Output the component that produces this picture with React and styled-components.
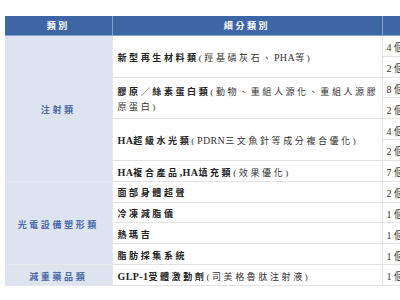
import React, { Fragment } from 'react'
import styled, { createGlobalStyle } from 'styled-components'

const GlobalStyle = createGlobalStyle`
  html, body {
    margin: 0;
    background: #fff;
    overflow: hidden;
  }
  body {
    font-family: "Liberation Serif", "Noto Sans CJK TC", serif;
  }
`

const Page = styled.div`
  padding: 16px 0 0 5px;
  width: 470px;
`

const Table = styled.table`
  border-collapse: collapse;
  table-layout: fixed;
  width: 450px;
  font-size: 9px;
  letter-spacing: 2.6px;
`

const Col = styled.col`
  width: ${p => p.$w}px;
`

const HeadCell = styled.th`
  height: 19px;
  padding: 0;
  background: #3e66a5;
  color: #fff;
  font-weight: bold;
  text-align: center;
  border: 1px solid #86a0cb;
  border-top: none;
  border-left: none;
`

const Row = styled.tr`
  height: 20.8px;
`

const CategoryCell = styled.td`
  background: #dde3ef;
  color: #4a6aa9;
  font-weight: bold;
  text-align: center;
  vertical-align: middle;
  padding: 3px 0 0;
  border: 1px solid #e6e8ee;
  border-left: none;
`

const ItemCell = styled.td`
  color: #222;
  padding: 4px 2px 0 5px;
  line-height: 15px;
  vertical-align: middle;
  border: 1px solid #e4e4e4;
`

const Name = styled.span`
  font-weight: bold;
`

const Note = styled.span`
  font-weight: normal;
  color: #333;
`

const Latin = styled.span`
  letter-spacing: 0.4px;
  font-size: 10px;
`

const Line = styled.span`
  white-space: nowrap;
`

const CountCell = styled.td`
  color: #333;
  padding: 2px 0 0 4px;
  font-size: 10px;
  white-space: nowrap;
  vertical-align: middle;
  border: 1px solid #e4e4e4;
  border-right: none;
`

const groups = [
  {
    category: '注射類',
    items: [
      { name: '新型再生材料類', note: ['(羥基磷灰石、PHA等)'], counts: ['4個', '2個'] },
      { name: '膠原／絲素蛋白類', note: ['(動物、重組人源化、重組人源膠', '原蛋白)'], counts: ['8個', '2個'] },
      { name: 'HA超級水光類', note: ['(PDRN三文魚針等成分複合優化)'], counts: ['4個', '2個'] },
      { name: 'HA複合產品,HA填充類', note: ['(效果優化)'], counts: ['7個'] },
    ],
  },
  {
    category: '光電設備塑形類',
    items: [
      { name: '面部身體超聲', counts: ['2個'] },
      { name: '冷凍減脂儀', counts: ['1個'] },
      { name: '熱瑪吉', counts: ['1個'] },
      { name: '脂肪採集系統', counts: ['1個'] },
    ],
  },
  {
    category: '減重藥品類',
    items: [
      { name: 'GLP-1受體激動劑', note: ['(司美格魯肽注射液)'], counts: ['1個'] },
    ],
  },
]

// latin runs are set tight, the CJK gets the wide tracking
function mixed(str) {
  return str.split(/([A-Za-z0-9\-,]+)/).map((part, i) =>
    /^[A-Za-z0-9\-,]+$/.test(part) ? <Latin key={i}>{part}</Latin> : part
  )
}

function ItemText({ name, note }) {
  if (!note) return <Name>{mixed(name)}</Name>
  return (
    <Fragment>
      <Line>
        <Name>{mixed(name)}</Name>
        <Note>{mixed(note[0])}</Note>
      </Line>
      {note.slice(1).map((l, i) => (
        <Fragment key={i}>
          <br />
          <Note>{mixed(l)}</Note>
        </Fragment>
      ))}
    </Fragment>
  )
}

export default function App() {
  return (
    <Fragment>
      <GlobalStyle />
      <Page>
        <Table>
          <colgroup>
            <Col $w={107} />
            <Col $w={270} />
            <Col $w={73} />
          </colgroup>
          <thead>
            <tr>
              <HeadCell>類別</HeadCell>
              <HeadCell>細分類別</HeadCell>
              <HeadCell>數量</HeadCell>
            </tr>
          </thead>
          <tbody>
            {groups.map(g => {
              const span = g.items.reduce((n, it) => n + it.counts.length, 0)
              return g.items.map((it, i) =>
                it.counts.map((c, j) => (
                  <Row key={g.category + i + '-' + j}>
                    {i === 0 && j === 0 && (
                      <CategoryCell rowSpan={span}>{g.category}</CategoryCell>
                    )}
                    {j === 0 && (
                      <ItemCell rowSpan={it.counts.length}>
                        <ItemText name={it.name} note={it.note} />
                      </ItemCell>
                    )}
                    <CountCell>{c}</CountCell>
                  </Row>
                ))
              )
            })}
          </tbody>
        </Table>
      </Page>
    </Fragment>
  )
}
